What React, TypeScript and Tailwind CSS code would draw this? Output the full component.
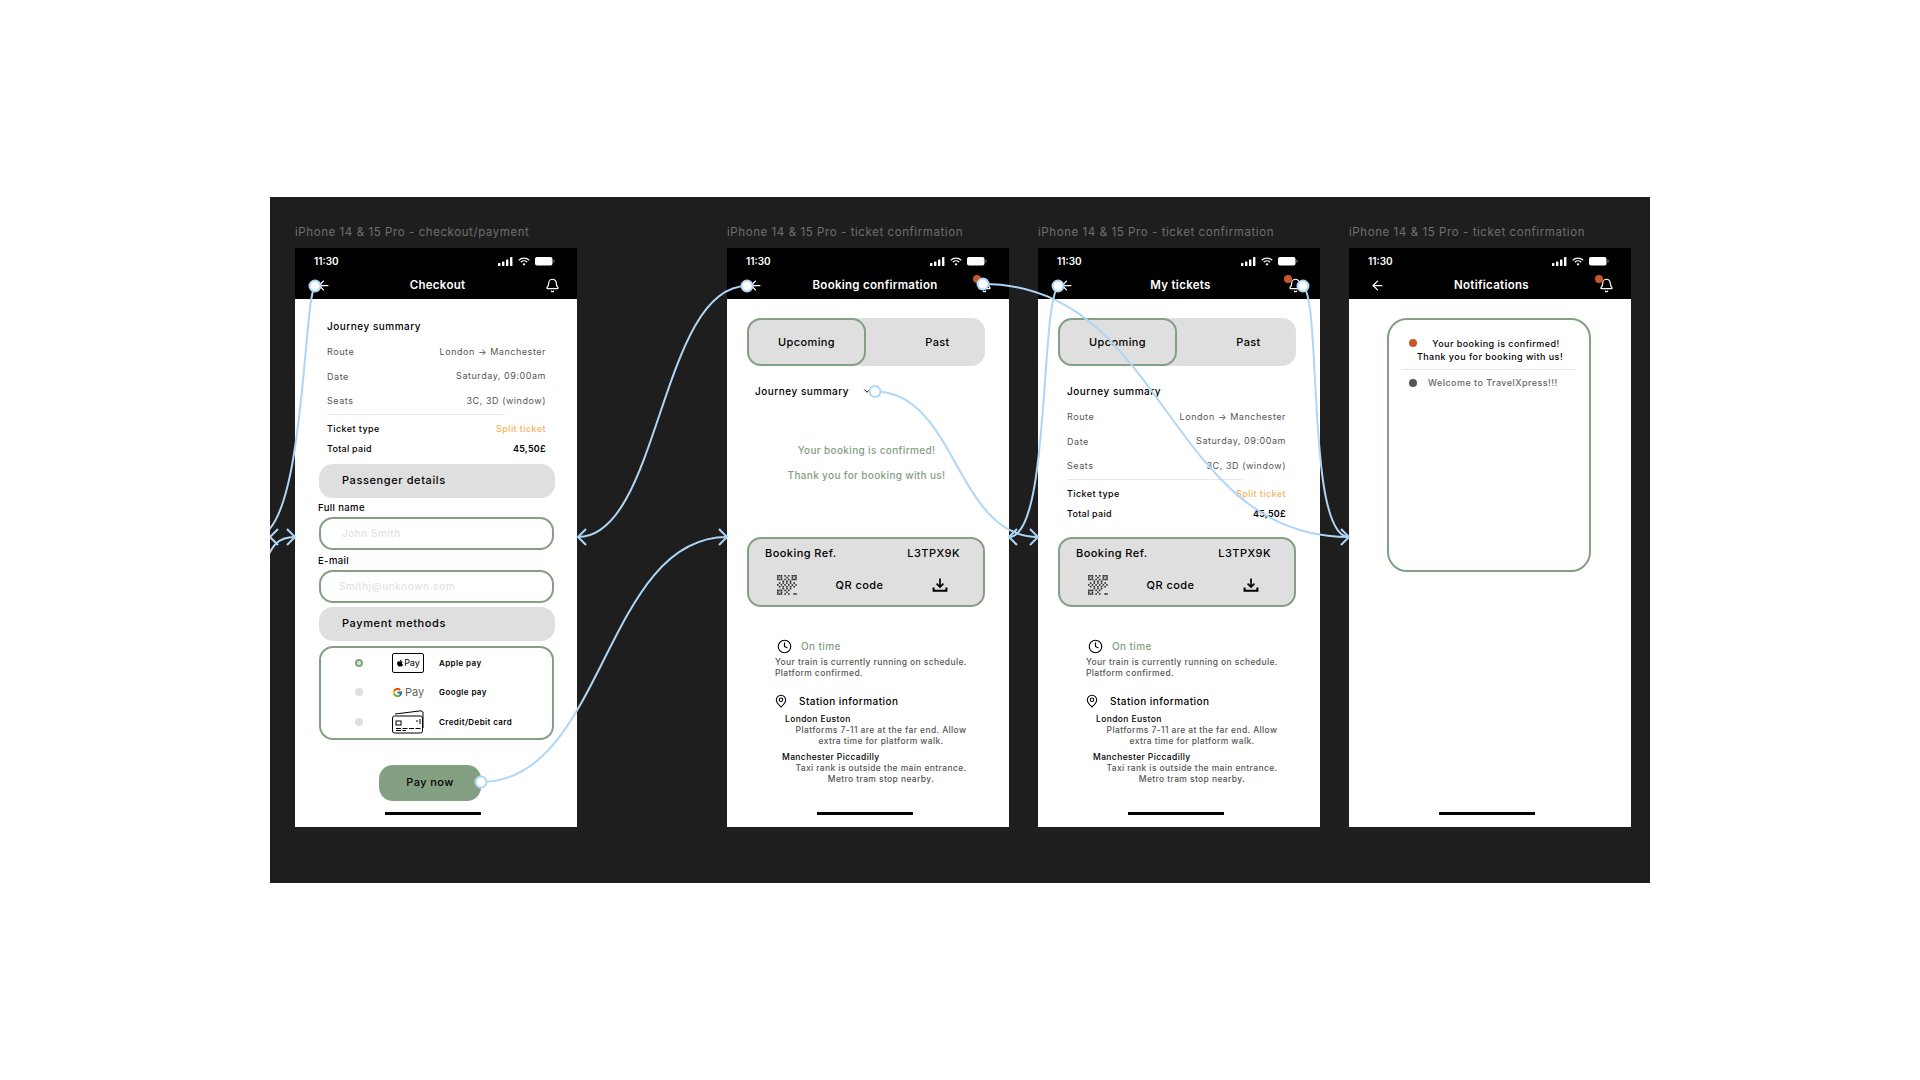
import React from "react";
import { ArrowLeft, Bell, Clock, MapPin, ChevronDown } from "lucide-react";
import { FaApple } from "react-icons/fa";
import { FcGoogle } from "react-icons/fc";

function Status() {
  return (
    <div className="flex h-[24px] items-center justify-between pl-[19px] pr-[22px] pt-[3px] text-white">
      <span className="text-[10px] font-semibold">11:30</span>
      <div className="flex items-center gap-[5px]">
        <svg width="15" height="9" viewBox="0 0 15 9" fill="white">
          <rect x="0" y="6" width="2.4" height="3" rx=".6" />
          <rect x="4" y="4.5" width="2.4" height="4.5" rx=".6" />
          <rect x="8" y="2.5" width="2.4" height="6.5" rx=".6" />
          <rect x="12" y="0" width="2.4" height="9" rx=".6" />
        </svg>
        <svg width="12" height="9" viewBox="0 0 12 9" fill="none" stroke="white" strokeWidth="1.2">
          <path d="M.8 3.2a7.5 7.5 0 0 1 10.4 0" />
          <path d="M2.8 5.2a4.6 4.6 0 0 1 6.4 0" />
          <path d="M6 8.8 4.5 7a2.2 2.2 0 0 1 3 0Z" fill="white" stroke="none" />
        </svg>
        <svg width="20" height="9" viewBox="0 0 20 9" fill="white">
          <rect x="0" y="0" width="17.5" height="8.5" rx="2" />
          <rect x="18.4" y="3" width="1.2" height="2.6" rx=".5" fill="#777" />
        </svg>
      </div>
    </div>
  );
}

function Nav({ title, dot, shift }: { title: string; dot?: boolean; shift?: boolean }) {
  return (
    <div className="flex h-[27px] items-center pl-[21px] pr-[17px] text-white">
      <ArrowLeft size={15} strokeWidth={2} className="shrink-0" />
      <div className={shift ? "flex-1 pl-[10px] text-center text-[11.5px] font-semibold tracking-[0.025em]" : "flex-1 pr-[1px] text-center text-[11.5px] font-semibold tracking-[0.025em]"}>{title}</div>
      <div className="relative shrink-0">
        <Bell size={15} strokeWidth={1.9} />
        {dot && <span className="absolute left-[-4px] top-[-3.5px] h-[8px] w-[8px] rounded-full bg-[#c9562a]" />}
      </div>
    </div>
  );
}

function Home() {
  return <div className="ml-[90px] h-[3px] w-[96px] bg-black" />;
}

function Row({ a, b }: { a: string; b: string }) {
  return (
    <div className="flex h-[24.5px] items-center justify-between text-[9px] tracking-[0.06em] text-[#555]">
      <span className="pt-[1px]">{a}</span>
      <span>{b}</span>
    </div>
  );
}

function Summary({ left }: { left: string }) {
  return (
    <div className={left}>
      <div className="flex h-[16px] items-center text-[10px] font-medium tracking-[0.05em] text-black">Journey summary</div>
      <div className="mt-[5px]">
        <Row a="Route" b="London → Manchester" />
        <Row a="Date" b="Saturday, 09:00am" />
        <Row a="Seats" b="3C, 3D (window)" />
      </div>
      <div className="mt-[1px] h-px w-[176px] bg-[#e6e6e6]" />
      <div className="mt-[4px] flex h-[20px] items-center justify-between text-[9px] font-medium tracking-[0.045em] text-black">
        <span>Ticket type</span>
        <span className="text-[#f6b25f]">Split ticket</span>
      </div>
      <div className="flex h-[19.5px] items-center justify-between text-[9px] font-semibold tracking-[0.03em] text-black">
        <span className="font-medium">Total paid</span>
        <span>45,50£</span>
      </div>
    </div>
  );
}

function Tabs() {
  return (
    <div className="ml-[20px] flex h-[48px] w-[238px] rounded-[14px] bg-[#dfdfdf] text-[11px] font-medium tracking-[0.035em] text-black">
      <div className="flex w-[119px] items-center justify-center rounded-[14px] border-2 border-[#84a082]">Upcoming</div>
      <div className="flex flex-1 items-center justify-center pl-[24px]">Past</div>
    </div>
  );
}

function Qr() {
  const cells = [
    "xxx.x.x.xxx", "x.x..x..x.x", "xxx.x.x.xxx", "...x.x.x...", ".x.x.x.x.x.", "x.x.x.x.x.x", ".x.x.x.x.x.",
    "...x.x.x...", "xxx.x.x....", "x.x..x.....", "xxx.x.x..xx",
  ];
  return (
    <svg width="20" height="20" viewBox="0 0 11 11" fill="#333">
      {cells.flatMap((r, y) => r.split("").map((c, x) => (c === "x" ? <rect key={x + "-" + y} x={x} y={y} width=".9" height=".9" /> : null)))}
    </svg>
  );
}

function Ticket() {
  return (
    <div className="ml-[20px] h-[70px] w-[238px] rounded-[14px] border-2 border-[#84a082] bg-[#dfdfdf] text-[11px] font-medium tracking-[0.04em] text-black">
      <div className="flex h-[22px] items-end justify-between pl-[16px] pr-[23px]">
        <span>Booking Ref.</span>
        <span>L3TPX9K</span>
      </div>
      <div className="mt-[11px] flex h-[26px] items-center justify-between pl-[28px] pr-[35px]">
        <Qr />
        <span className="pr-[10px]">QR code</span>
        <svg width="16" height="16" viewBox="0 0 16 16" fill="none" stroke="black" strokeWidth="1.7">
          <path d="M8 1.5v8M4.6 6.6 8 10l3.4-3.4" />
          <path d="M1.6 10.5v3.2h12.8v-3.2" strokeWidth="2" />
        </svg>
      </div>
    </div>
  );
}

function Info() {
  return (
    <div className="text-[8.5px] leading-[11px] tracking-[0.045em] text-[#555]">
      <div className="ml-[50px] mt-[32px] flex h-[14px] items-center">
        <Clock size={15} strokeWidth={1.8} className="text-black" />
        <span className="ml-[9px] text-[10px] font-medium tracking-[0.04em] text-[#84a082]">On time</span>
      </div>
      <div className="ml-[48px] mt-[4px] w-[210px] font-medium">
        Your train is currently running on schedule.
        <br />
        Platform confirmed.
      </div>
      <div className="ml-[47px] mt-[15px] flex h-[14px] items-center">
        <MapPin size={14} strokeWidth={1.8} className="text-black" />
        <span className="ml-[11px] text-[10px] font-medium tracking-[0.045em] text-black">Station information</span>
      </div>
      <div className="ml-[58px] mt-[6px] w-[192px] font-medium">
        <div className="text-black">London Euston</div>
        <div className="text-center">Platforms 7-11 are at the far end. Allow extra time for platform walk.</div>
      </div>
      <div className="ml-[55px] mt-[5px] w-[198px] font-medium">
        <div className="text-black">Manchester Piccadilly</div>
        <div className="text-center">Taxi rank is outside the main entrance. Metro tram stop nearby.</div>
      </div>
    </div>
  );
}

function Pay({ active, icon, label, h }: { active?: boolean; icon: React.ReactNode; label: string; h: string }) {
  return (
    <div className={"flex items-center pl-[34px] " + h}>
      <span className={active ? "h-[8px] w-[8px] rounded-full border-2 border-[#84a082] bg-[#e6e6e6]" : "h-[8px] w-[8px] rounded-full bg-[#dfdfdf]"} />
      <div className="ml-[29px] flex w-[47px] shrink-0 items-center">{icon}</div>
      <span className="text-[8px] font-semibold tracking-[0.05em] text-black">{label}</span>
    </div>
  );
}

function CardIcon() {
  return (
    <svg width="33" height="24" viewBox="0 0 33 24" fill="none" stroke="black" strokeWidth="1">
      <path d="M3 4 L29 .8 L31 2 V18" />
      <rect x=".5" y="6" width="30" height="17" rx="2" fill="white" />
      <rect x="4" y="11" width="5" height="4" />
      <path d="M4 18.5h26M4 20.5h10M24 11h2" strokeDasharray="5 1.5" />
      <path d="M28 9v5" />
    </svg>
  );
}

function Label({ children }: { children: React.ReactNode }) {
  return <div className="flex h-[16px] items-center pl-[23px] text-[9.5px] font-medium tracking-[0.04em] text-black">{children}</div>;
}

function Pill({ children }: { children: React.ReactNode }) {
  return <div className="ml-[24px] flex h-[34px] w-[236px] items-center rounded-[14px] bg-[#dfdfdf] pl-[23px] text-[11px] font-medium tracking-[0.055em] text-black">{children}</div>;
}

function Field({ children, pl }: { children: React.ReactNode; pl: string }) {
  return <div className={"ml-[24px] flex h-[33px] w-[235px] items-center rounded-[14px] border-2 border-[#84a082] text-[10px] font-medium tracking-[0.05em] text-[#e2e2e2] " + pl}>{children}</div>;
}

function Screen({ caption, ml, title, dot, shift, children }: { caption: string; ml: string; title: string; dot?: boolean; shift?: boolean; children: React.ReactNode }) {
  return (
    <div className={"w-[282px] shrink-0 " + ml}>
      <div className="flex h-[18px] items-center text-[11.5px] tracking-[0.05em] text-[#6f6f6f]">{caption}</div>
      <div className="mt-[6px] flex h-[579px] flex-col bg-white">
        <div className="h-[51px] shrink-0 bg-black">
          <Status />
          <Nav title={title} dot={dot} shift={shift} />
        </div>
        <div className="relative flex-1">{children}</div>
      </div>
    </div>
  );
}

function Connectors() {
  const s = { fill: "none", stroke: "#aed6f7", strokeWidth: 2 };
  const dots: [number, number][] = [
    [315, 286],
    [481, 782],
    [747, 286],
    [875, 391.5],
    [983, 284],
    [1058, 286],
    [1303, 286],
  ];
  return (
    <svg className="pointer-events-none absolute inset-0 h-full w-full" viewBox="270 197 1380 686">
      <g {...s}>
        <path d="M315 286C303 300 305 537 255 537" />
        <path d="M258 575C272 547 275 537 295 537" />
        <path d="M747 286C660 286 660 537 578 537" />
        <path d="M481 782C604 782 604 537 727 537" />
        <path d="M875 391.5C956 391.5 956 537 1038 537" />
        <path d="M1058 286C1040 310 1050 537 1009 537" />
        <path d="M983 284C1166 284 1166 537 1349 537" />
        <path d="M1303 286C1322 300 1306 537 1349 537" />
        <path d="M287 529l8 8-8 8M278 529l-8 8 8 8" />
        <path d="M586 529l-8 8 8 8M719 529l8 8-8 8" />
        <path d="M1017 529l-8 8 8 8M1030 529l8 8-8 8" />
        <path d="M1341 529l8 8-8 8" />
      </g>
      {dots.map(([x, y]) => (
        <circle key={x} cx={x} cy={y} r="5.5" fill="white" stroke="#aed6f7" strokeWidth="2" />
      ))}
    </svg>
  );
}

export default function App() {
  return (
    <div className="min-h-[1080px] bg-white pl-[270px] pt-[197px] font-['Inter',sans-serif]">
      <div className="relative h-[686px] w-[1380px] overflow-hidden bg-[#1e1e1e]">
        <div className="flex pl-[25px] pt-[27px]">
          <Screen caption="iPhone 14 & 15 Pro - checkout/payment" ml="" title="Checkout">
            <div className="pt-[19px]">
              <Summary left="ml-[32px] w-[219px]" />
              <div className="mt-[5.5px]"><Pill>Passenger details</Pill></div>
              <div className="mt-[3px]"><Label>Full name</Label></div>
              <Field pl="pl-[21px]">John Smith</Field>
              <div className="mt-[4px]"><Label>E-mail</Label></div>
              <Field pl="pl-[18px]">Smithj@unknown.com</Field>
              <div className="mt-[4px]"><Pill>Payment methods</Pill></div>
              <div className="ml-[24px] mt-[5px] h-[94px] w-[235px] rounded-[14px] border-2 border-[#84a082]">
                <Pay active h="h-[30px]" label="Apple pay" icon={
                  <span className="flex h-[20px] w-[32px] items-center justify-center rounded-[2px] border border-black text-[9px] text-black"><FaApple size={8} />Pay</span>
                } />
                <Pay h="h-[29px]" label="Google pay" icon={
                  <span className="flex items-center gap-[2px] text-[11px] text-[#666]"><FcGoogle size={11} />Pay</span>
                } />
                <Pay h="h-[31px]" label="Credit/Debit card" icon={<CardIcon />} />
              </div>
              <div className="ml-[84px] mt-[25px] flex h-[36px] w-[102px] items-center justify-center rounded-[14px] bg-[#84a082] text-[11px] font-medium tracking-[0.04em] text-black">Pay now</div>
            </div>
            <div className="absolute bottom-[12px] left-0"><Home /></div>
          </Screen>

          <Screen caption="iPhone 14 & 15 Pro - ticket confirmation" ml="ml-[150px]" title="Booking confirmation" shift dot>
            <div className="pt-[19px]">
              <Tabs />
              <div className="ml-[28px] mt-[17px] flex h-[16px] items-center text-[10px] font-medium tracking-[0.05em] text-black">
                Journey summary
                <ChevronDown size={10} strokeWidth={2.4} className="ml-[13px]" />
              </div>
              <div className="mt-[44px] flex h-[40px] flex-col items-center justify-between pr-[3px] text-[10px] font-medium tracking-[0.035em] text-[#84a082]">
                <div>Your booking is confirmed!</div>
                <div>Thank you for booking with us!</div>
              </div>
              <div className="mt-[54px]"><Ticket /></div>
              <Info />
            </div>
            <div className="absolute bottom-[12px] left-0"><Home /></div>
          </Screen>

          <Screen caption="iPhone 14 & 15 Pro - ticket confirmation" ml="ml-[29px]" title="My tickets" dot>
            <div className="pt-[19px]">
              <Tabs />
              <div className="mt-[17px]"><Summary left="ml-[29px] w-[219px]" /></div>
              <div className="mt-[14px]"><Ticket /></div>
              <Info />
            </div>
            <div className="absolute bottom-[12px] left-0"><Home /></div>
          </Screen>

          <Screen caption="iPhone 14 & 15 Pro - ticket confirmation" ml="ml-[29px]" title="Notifications" dot>
            <div className="pt-[19px]">
              <div className="ml-[38px] h-[254px] w-[204px] rounded-[20px] border-2 border-[#84a082] px-[13px] pt-[18px] text-[9px] font-medium leading-[12.5px] tracking-[0.05em] text-black">
                <div className="relative pb-[6px] text-center">
                  <span className="absolute left-[7px] top-[1px] h-[8px] w-[8px] rounded-full bg-[#c9562a]" />
                  <div className="pl-[14px]">Your booking is confirmed!</div>
                  <div className="pl-[2px]">Thank you for booking with us!</div>
                </div>
                <div className="h-px bg-[#e6e6e6]" />
                <div className="mt-[7px] flex items-center text-[#666]">
                  <span className="ml-[7px] h-[8px] w-[8px] rounded-full bg-[#555]" />
                  <span className="ml-[11px]">Welcome to TravelXpress!!!</span>
                </div>
              </div>
            </div>
            <div className="absolute bottom-[12px] left-0"><Home /></div>
          </Screen>
        </div>
        <Connectors />
      </div>
    </div>
  );
}
